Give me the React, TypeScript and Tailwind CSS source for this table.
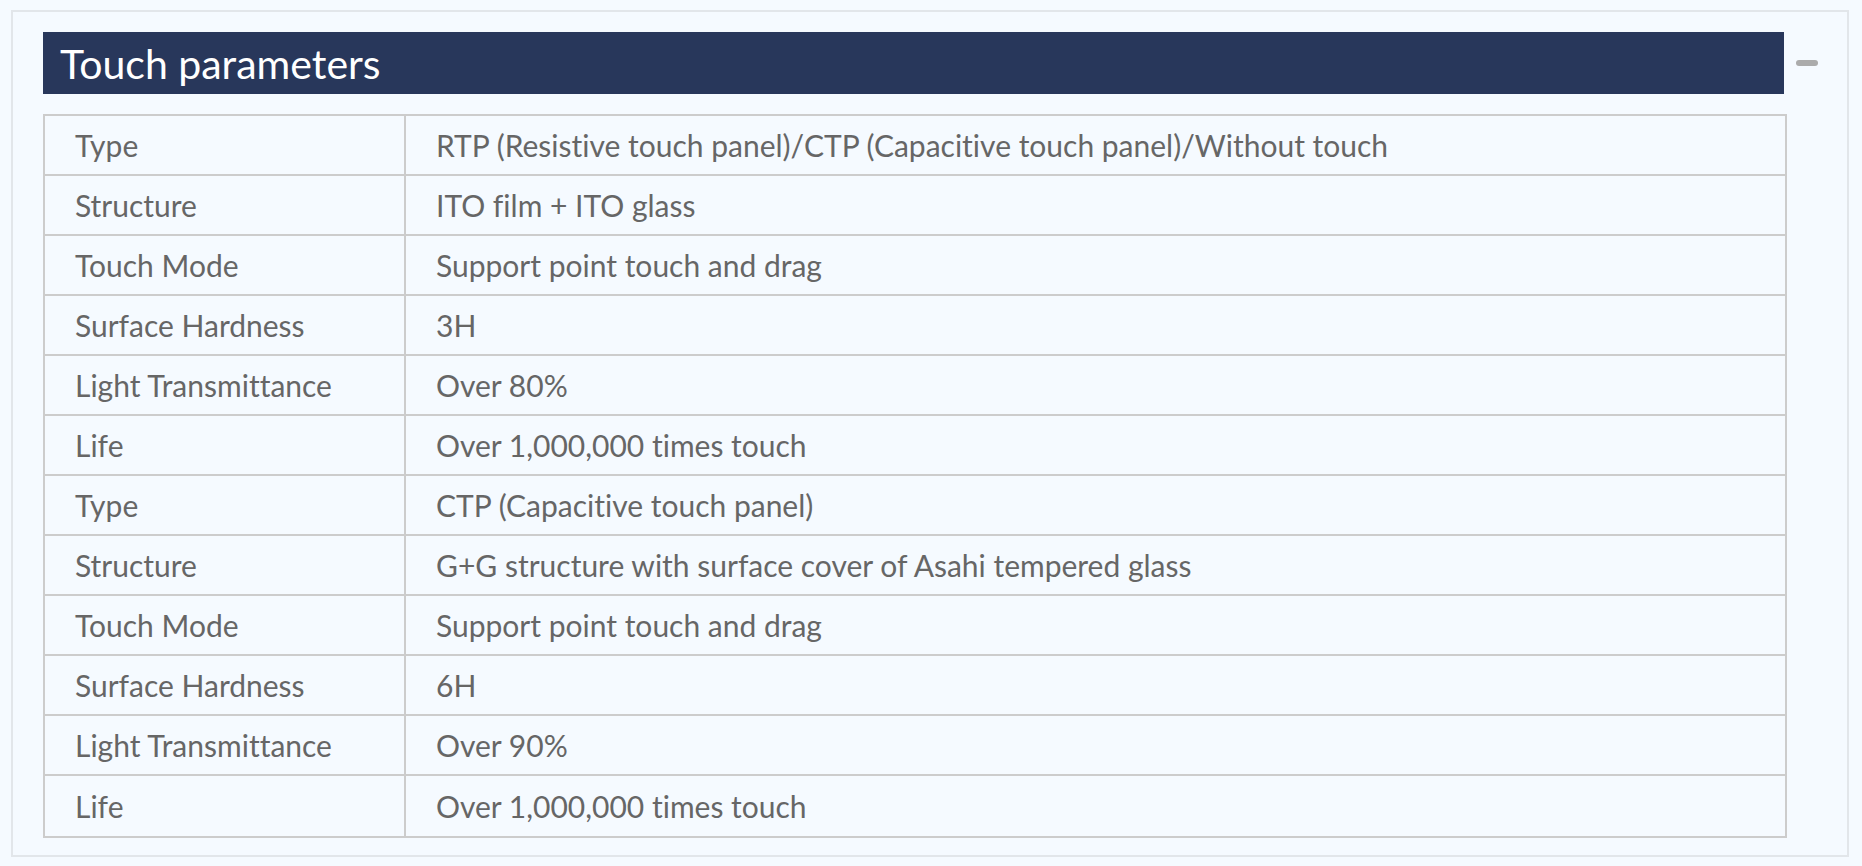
import React from "react";

const rows: [string, string][] = [
  ["Type", "RTP (Resistive touch panel)/CTP (Capacitive touch panel)/Without touch"],
  ["Structure", "ITO film + ITO glass"],
  ["Touch Mode", "Support point touch and drag"],
  ["Surface Hardness", "3H"],
  ["Light Transmittance", "Over 80%"],
  ["Life", "Over 1,000,000 times touch"],
  ["Type", "CTP (Capacitive touch panel)"],
  ["Structure", "G+G structure with surface cover of Asahi tempered glass"],
  ["Touch Mode", "Support point touch and drag"],
  ["Surface Hardness", "6H"],
  ["Light Transmittance", "Over 90%"],
  ["Life", "Over 1,000,000 times touch"],
];

export default function App() {
  return (
    <div
      className="w-[1862px] h-[866px] bg-[#f5faff] pt-[10px] pl-[11px] [font-variant-ligatures:none]"
      style={{ fontFamily: "Lato, 'Open Sans', sans-serif" }}
    >
      <div className="w-[1838px] h-[847px] border-2 border-[#e2e6ea] pt-[20px] pl-[30px]">
        <div className="flex items-center">
          <div className="w-[1741px] h-[62px] bg-[#28375b] flex items-center pl-[17px]">
            <span className="text-white text-[41px] leading-none">Touch parameters</span>
          </div>
          <div className="ml-[12px] w-[22px] h-[6px] rounded-full bg-[#ababab]" />
        </div>
        <div className="mt-[20px] w-[1744px] border-2 border-[#cccccc]">
          {rows.map(([k, v], i) => (
            <div
              key={i}
              className={`flex h-[60px] ${i < rows.length - 1 ? "border-b-2 border-[#cccccc]" : ""}`}
            >
              <div className="w-[361px] shrink-0 border-r-2 border-[#cccccc] flex items-center pl-[30px] text-[30px] text-[#666666]">
                {k}
              </div>
              <div className="flex-1 flex items-center pl-[30px] text-[30px] text-[#666666]">
                {v}
              </div>
            </div>
          ))}
        </div>
      </div>
    </div>
  );
}
